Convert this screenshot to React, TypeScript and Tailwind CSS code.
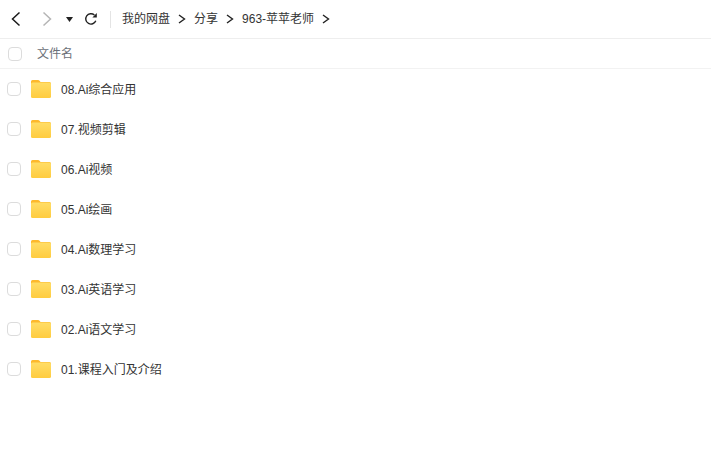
import React from 'react'

const FOLDERS = [
  '08.Ai综合应用',
  '07.视频剪辑',
  '06.Ai视频',
  '05.Ai绘画',
  '04.Ai数理学习',
  '03.Ai英语学习',
  '02.Ai语文学习',
  '01.课程入门及介绍',
]

const CRUMBS = ['我的网盘', '分享', '963-苹苹老师']

function Chevron({ dir, color, size }: { dir: 'left' | 'right'; color: string; size: number }) {
  return (
    <svg width={size} height={size} viewBox="0 0 16 16" fill="none" className="shrink-0">
      <path
        d={dir === 'left' ? 'M11.5 1.5 L4.5 8 L11.5 14.5' : 'M4.5 1.5 L11.5 8 L4.5 14.5'}
        stroke={color}
        strokeWidth="1.5"
      />
    </svg>
  )
}

function CrumbArrow() {
  return (
    <svg width="8" height="10" viewBox="0 0 8 10" fill="none" className="shrink-0">
      <path d="M1 1 L6.5 5 L1 9" stroke="#222" strokeWidth="1.4" />
    </svg>
  )
}

function FolderIcon() {
  return (
    <svg width="22" height="20" viewBox="0 0 22 20" className="shrink-0">
      <defs>
        <linearGradient id="folderFill" x1="0" y1="0" x2="0" y2="1">
          <stop offset="0" stopColor="#ffdd66" />
          <stop offset="1" stopColor="#ffcc40" />
        </linearGradient>
      </defs>
      <path d="M1 2.5 Q1 1 2.5 1 H8 Q9 1 9.8 2 L10.5 3 H19.5 Q21 3 21 4.5 V8 H1 Z" fill="#fdb92c" />
      <rect x="1" y="3.5" width="20" height="15.5" rx="1.5" fill="url(#folderFill)" />
    </svg>
  )
}

function Checkbox() {
  return <div className="w-[14px] h-[14px] rounded-[4px] border border-[#dcdcdc] bg-white shrink-0" />
}

export default function App() {
  return (
    <div className="w-[711px] h-[454px] bg-white overflow-hidden font-['Liberation_Sans','Noto_Sans_CJK_SC',sans-serif] text-[12px] text-[#333]">
      <div className="h-[39px] flex items-center border-b border-[#eeeeee]">
        <div className="ml-[8px]">
          <Chevron dir="left" color="#1a1a1a" size={16} />
        </div>
        <div className="ml-[15px]">
          <Chevron dir="right" color="#b5b5b5" size={16} />
        </div>
        <svg width="7" height="5" viewBox="0 0 7 5" className="ml-[11px] shrink-0">
          <path d="M0 0 H7 L3.5 5 Z" fill="#222" />
        </svg>
        <svg width="14" height="14" viewBox="0 0 14 14" fill="none" className="ml-[11px] shrink-0">
          <path d="M11.8 8.8 A5.2 5.2 0 1 1 10.4 3" stroke="#222" strokeWidth="1.4" />
          <path d="M12.8 1 V5.4 H8.4 Z" fill="#222" />
        </svg>
        <div className="w-px h-[17px] bg-[#e4e4e4] ml-[12px] mr-[11px]" />
        {CRUMBS.map((crumb) => (
          <React.Fragment key={crumb}>
            <span className="whitespace-nowrap">{crumb}</span>
            <div className="mx-[8px]">
              <CrumbArrow />
            </div>
          </React.Fragment>
        ))}
      </div>

      <div className="h-[30px] flex items-center border-b border-[#f2f2f2] pl-[8px]">
        <Checkbox />
        <span className="ml-[15px] text-[#6b7078]">文件名</span>
      </div>

      <div>
        {FOLDERS.map((name) => (
          <div key={name} className="h-[40px] flex items-center pl-[7px]">
            <Checkbox />
            <div className="ml-[9px]">
              <FolderIcon />
            </div>
            <span className="ml-[9px] pt-[2px]">{name}</span>
          </div>
        ))}
      </div>
    </div>
  )
}
